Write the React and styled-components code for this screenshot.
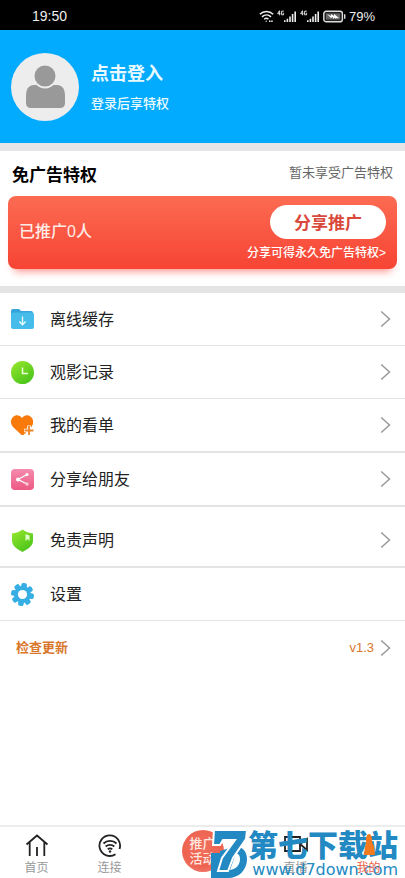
import React from 'react'
import styled, { createGlobalStyle } from 'styled-components'

const GlobalStyle = createGlobalStyle`
    *{
        box-sizing: border-box;
    }

    body{
        margin: 0;
        background-color: #fff;
        color: #222;
        font-family: "Liberation Sans", "Noto Sans CJK SC", sans-serif;
    }

    button, a{
        font-family: inherit;
    }

    h1, h2, p{
        margin: 0;
    }

    svg{
        display: block;
        flex-shrink: 0;
    }
`

const Page = styled.div`
    display: flex;
    flex-direction: column;
    min-height: 100vh;
`

const StatusBar = styled.div`
    display: flex;
    justify-content: space-between;
    align-items: center;
    height: 30px;
    padding: 2px 30px 0 32px;
    background-color: #000;
    color: #eee;
    font-size: 13px;
`

const StatusClock = styled.span`
    font-size: 14px;
`

const StatusIcons = styled.div`
    display: flex;
    align-items: center;
    gap: 3px;
`

const Profile = styled.header`
    display: flex;
    align-items: center;
    gap: 12px;
    height: 113px;
    padding: 0 11px;
    background-color: #03abff;
    color: #fff;
`

const ProfileText = styled.div`
    display: flex;
    flex-direction: column;
    gap: 8px;
    padding-top: 2px;
`

const LoginButton = styled.button`
    padding: 0;
    border: 0;
    background: none;
    color: #e8faff;
    font-size: 18px;
    font-weight: 700;
    line-height: 24px;
    text-align: left;
`

const LoginHint = styled.p`
    color: #e8faff;
    font-size: 13px;
    font-weight: 500;
    line-height: 20px;
`

const Privilege = styled.section`
    padding: 8px 8px 17px;
    border-top: 8px solid #e5e5e8;
    border-bottom: 7px solid #e4e4e4;
`

const PrivilegeHead = styled.div`
    display: flex;
    justify-content: space-between;
    align-items: center;
    height: 28px;
    margin-bottom: 9px;
    padding: 0 4px;
`

const PrivilegeTitle = styled.h2`
    color: #000;
    font-size: 17px;
    font-weight: 700;
`

const PrivilegeState = styled.span`
    color: #666;
    font-size: 13px;
    padding-bottom: 4px;
`

const PromoCard = styled.div`
    display: flex;
    justify-content: space-between;
    align-items: center;
    height: 73px;
    padding: 0 11px;
    border-radius: 8px;
    background: linear-gradient( #fc6b52, #f74434 );
    box-shadow: 0 8px 8px -6px #ff8a80;
    color: #ffebe6;
`

const PromoCount = styled.span`
    font-size: 16px;
    font-weight: 500;
    padding-bottom: 6px;
`

const PromoActions = styled.div`
    display: flex;
    flex-direction: column;
    align-items: flex-end;
    gap: 4px;
    padding-top: 2px;
`

const ShareButton = styled.button`
    width: 116px;
    height: 34px;
    padding: 0;
    border: 0;
    border-radius: 17px;
    background-color: #fff;
    color: #d9483b;
    font-size: 17px;
    font-weight: 700;
`

const ShareLink = styled.a`
    color: #fff;
    font-size: 12px;
    font-weight: 500;
    line-height: 20px;
    text-decoration: none;
`

const Menu = styled.nav`
    display: flex;
    flex-direction: column;
    flex-grow: 1;
`

const MenuRow = styled.a`
    display: flex;
    align-items: center;
    gap: 15px;
    min-height: ${ ( { $thick } ) => $thick ? 54 : 53 }px;
    margin-top: ${ ( { $spaced } ) => $spaced ? 7 : 0 }px;
    padding: 0 14px 0 10px;
    border-bottom: ${ ( { $thick } ) => $thick ? 2 : 1 }px solid #e4e4e4;
    color: #222;
    font-size: 16px;
    text-decoration: none;
`

const MenuLabel = styled.span`
    flex-grow: 1;
    padding-bottom: 2px;
`

const UpdateRow = styled( MenuRow )`
    gap: 6px;
    padding-left: 16px;
    border-bottom: 0;
    color: #d9782d;
    font-size: 13px;
`

const UpdateLabel = styled( MenuLabel )`
    font-weight: 700;
`

const TabBar = styled.nav`
    position: relative;
    display: grid;
    grid-template-columns: 73px 73px 1fr 73px 73px;
    height: 53px;
    padding-bottom: 1px;
    border-top: 2px solid #ececec;
`

const Tab = styled.a`
    position: relative;
    z-index: ${ ( { $active } ) => $active ? 1 : 0 };
    display: flex;
    flex-direction: column;
    align-items: center;
    justify-content: flex-end;
    gap: 2px;
    color: ${ ( { $active } ) => $active ? '#e8604a' : '#999' };
    font-size: 12px;
    line-height: 17px;
    text-decoration: none;
`

const PromoTab = styled.button`
    justify-self: center;
    width: 42px;
    height: 42px;
    margin-top: 3px;
    padding: 0;
    border: 0;
    border-radius: 50%;
    background: radial-gradient( circle at 50% 40%, #f0705e, #ee6350 60%, #f08a7c );
    color: #ffe9e0;
    font-size: 13px;
    font-weight: 500;
    line-height: 15px;
`

const Watermark = styled.div`
    position: absolute;
    right: 7px;
    bottom: 0;
    display: flex;
    align-items: flex-end;
    color: #2389c2;
    pointer-events: none;
`

const WatermarkText = styled.div`
    display: flex;
    flex-direction: column;
    align-items: flex-end;
`

const WatermarkName = styled.span`
    font-size: 30px;
    font-weight: 900;
    line-height: 32px;
`

const WatermarkUrl = styled.span`
    font-family: "DejaVu Sans", sans-serif;
    font-size: 16px;
    line-height: 16px;
`

const WifiIcon = () => (
    <svg width="15" height="13" viewBox="0 0 15 13" fill="none" stroke="#eee" strokeWidth="1.5">
        <path d="M.8 4.2C4.6.5 10.4.5 14.2 4.2M3 6.9c2.6-2.5 6.4-2.5 9 0M5.2 9.3c1.3-1.2 3-1.2 4.2 0" />
        <circle cx="7.2" cy="11.2" r=".7" fill="#eee" stroke="none" />
        <path d="M10 11.3h4" strokeDasharray="1.5 .7" />
    </svg>
)

const SignalIcon = () => (
    <svg width="20" height="13" viewBox="0 0 20 13">
        <path d="M2.4.7.6 3.700h2.800M2.600.7v4.600M6.800 1.200H4.600v3.600h2V3.200h-.9" fill="none" stroke="#ddd" />
        <path d="M7 10.300h1.600V12H7zM9.600 8.800h1.600V12H9.600zM12.200 6.600h1.600V12h-1.600zM14.800 4h1.600v8h-1.600zM17.400 1.500H19V12h-1.600z" fill="#eee" />
    </svg>
)

const BatteryIcon = () => (
    <svg width="23" height="13" viewBox="0 0 23 13">
        <rect x=".8" y="1.2" width="18.6" height="10.6" rx="2.4" fill="#222" stroke="#ddd" strokeWidth="1.4" />
        <path d="M3 3.5h14v6H3z" fill="#666" />
        <path d="m4 4 4 2V4l3 2V4l5 4-4 .5V7.500l-2 1.500V7l-2 1z" fill="#fff" />
        <path d="M21.700 4.200v4.600" stroke="#ddd" strokeWidth="1.4" />
    </svg>
)

const Avatar = () => (
    <svg width="68" height="68" viewBox="0 0 68 68">
        <circle cx="34" cy="34" r="34" fill="#ededed" />
        <path d="M23 32C17 32 15 37 15 43v7q0 5 5 5h29q5 0 5-5v-7c0-6-2-11-8-11z" fill="#999" />
        <circle cx="34" cy="23" r="11.5" fill="#999" stroke="#ededed" strokeWidth="2" />
    </svg>
)

const FolderIcon = () => (
    <svg width="25" height="25" viewBox="0 0 25 25">
        <path d="M1 4q0-2 2-2h6l2 2h10q2 0 2 2v3H1z" fill="#35a3dc" />
        <path d="M1 7.5q0-2 2-2h19q2 0 2 2V20q0 2-2 2H3q-2 0-2-2z" fill="#45bcea" />
        <path d="M12.5 9.5v8M9.3 14.5l3.2 3.2 3.2-3.2" fill="none" stroke="#e6faff" strokeWidth="1.4" />
    </svg>
)

const ClockIcon = () => (
    <svg width="25" height="25" viewBox="0 0 25 25">
        <defs>
            <linearGradient id="lime" x2=".7" y2="1">
                <stop stopColor="#9be82d" />
                <stop offset="1" stopColor="#49c41a" />
            </linearGradient>
        </defs>
        <circle cx="12.5" cy="12.5" r="11.5" fill="url(#lime)" />
        <path d="M12.5 7.5v6H18" fill="none" stroke="#eaffd8" strokeWidth="1.5" />
    </svg>
)

const HeartIcon = () => (
    <svg width="25" height="25" viewBox="0 0 25 25">
        <path d="M12 5C9.500 1.500 5.500 1.500 3 4c-3 3-2.500 7 0 10l8 7.500q1.500 1.200 3 0l7-7c2.800-3 3-8 0-10.500-2.500-2.500-6.500-2.500-9 1z" fill="#f87a0b" />
        <path d="M19 12.500v10M14 17.500h10" stroke="#fff" strokeWidth="3.600" />
        <path d="M19 13v9M14.500 17.500h9" stroke="#f08426" strokeWidth="1.800" />
    </svg>
)

const ShareIcon = () => (
    <svg width="25" height="25" viewBox="0 0 25 25">
        <defs>
            <linearGradient id="pink" x2="0" y2="1">
                <stop stopColor="#f58cae" />
                <stop offset="1" stopColor="#ec5983" />
            </linearGradient>
        </defs>
        <rect x="1" y="2" width="23" height="21" rx="4" fill="url(#pink)" />
        <path d="m17 7.5-9 5 9 4.500" fill="none" stroke="#fff" strokeWidth="1.300" />
        <circle cx="8" cy="12.5" r="2" fill="#fff" />
        <circle cx="17" cy="7.5" r="1.5" fill="#fff" />
        <circle cx="17" cy="17" r="1.7" fill="#fbc5d6" />
    </svg>
)

const ShieldIcon = () => (
    <svg width="25" height="25" viewBox="0 0 25 25">
        <path d="M12.5 1.500C9.500 4 6 5 2 5.500v7c0 5.500 5 8.500 10.500 11.500C18 21 23 18 23 12.500v-7c-4-.5-7.500-1.500-10.500-4z" fill="url(#lime)" />
        <path d="M15.500 6 19.500 7.500v5.500l-2-2-2 2z" fill="#e2ffc9" />
    </svg>
)

const teeth = [ 0, 45, 90, 135, 180, 225, 270, 315 ]

const GearIcon = () => (
    <svg width="25" height="25" viewBox="0 0 25 25">
        <g fill="#35aee4">
            { teeth.map( angle => (
                <rect key={ angle } x="9.7" y="1" width="5.6" height="8" rx="1.8" transform={ `rotate(${ angle + 10 } 12.5 12.5)` } />
            ) ) }
            <circle cx="12.5" cy="12.5" r="8.5" />
        </g>
        <circle cx="12.5" cy="12.5" r="4.6" fill="#fff" />
    </svg>
)

const Arrow = () => (
    <svg width="11" height="18" viewBox="0 0 11 18" fill="none" stroke="#999" strokeWidth="1.5">
        <path d="m1.2 1.5 8.300 7.500-8.300 7.500" />
    </svg>
)

const HomeIcon = () => (
    <svg width="24" height="24" viewBox="0 0 24 24" fill="none" stroke="#222" strokeWidth="1.8">
        <path d="M1.500 10.500 12 1.500l10.500 9M4.700 8v14M19.300 8v14M12 13v9" />
    </svg>
)

const LinkIcon = () => (
    <svg width="24" height="24" viewBox="0 0 24 24" fill="none" stroke="#222" strokeWidth="1.8">
        <path d="M17.500 20.200A10.300 10.300 0 1 1 21.500 15" />
        <path d="M5.500 9.500c3.500-3.500 9.500-3.500 13 0M7.700 12.500c2.400-2.300 6.200-2.300 8.600 0M9.800 15.300c1.200-1.200 3.200-1.200 4.400 0" />
        <circle cx="12" cy="17.5" r="1.2" fill="#222" stroke="none" />
    </svg>
)

const CameraIcon = () => (
    <svg width="24" height="24" viewBox="0 0 24 24" fill="none" stroke="#222" strokeWidth="1.8">
        <path d="M1 3h15v14H1zM16 10l7-5v11z" />
    </svg>
)

const MineIcon = () => (
    <svg width="24" height="24" viewBox="0 0 24 24" fill="#f47a20">
        <path d="M12 0c2 0 3 3 3 6s1 4 2 6l1 9H7l1-9c1-2 1-3 1-6s1-6 3-6z" />
    </svg>
)

const SevenLogo = () => (
    <svg width="38" height="49" viewBox="0 0 38 49" fill="#2389c2">
        <path d="M1 24h9v-2l16-5c7 1 11 6 11 13 0 11-8 19-19 19H1z" />
        <path d="M26 24c3 1 4 3 4 6 0 6-4 10-10 11z" fill="#fff" />
        <path d="M4 1h33l-1 9-13 19-5 13H8l4-13L25 11H13l-3 5H3z" stroke="#fff" strokeWidth="2" />
    </svg>
)

const rows = [
    { label: '离线缓存', Icon: FolderIcon },
    { label: '观影记录', Icon: ClockIcon },
    { label: '我的看单', Icon: HeartIcon, thick: true },
    { label: '分享给朋友', Icon: ShareIcon, thick: true },
    { label: '免责声明', Icon: ShieldIcon, thick: true, spaced: true },
    { label: '设置', Icon: GearIcon, noArrow: true },
]

export default function App()
{
    return (
        <Page>
            <GlobalStyle />

            <StatusBar>
                <StatusClock>19:50</StatusClock>
                <StatusIcons>
                    <WifiIcon />
                    <SignalIcon />
                    <SignalIcon />
                    <BatteryIcon />
                    <span>79%</span>
                </StatusIcons>
            </StatusBar>

            <Profile>
                <Avatar />
                <ProfileText>
                    <LoginButton>点击登入</LoginButton>
                    <LoginHint>登录后享特权</LoginHint>
                </ProfileText>
            </Profile>

            <Privilege>
                <PrivilegeHead>
                    <PrivilegeTitle>免广告特权</PrivilegeTitle>
                    <PrivilegeState>暂未享受广告特权</PrivilegeState>
                </PrivilegeHead>
                <PromoCard>
                    <PromoCount>已推广0人</PromoCount>
                    <PromoActions>
                        <ShareButton>分享推广</ShareButton>
                        <ShareLink href="#share">分享可得永久免广告特权&gt;</ShareLink>
                    </PromoActions>
                </PromoCard>
            </Privilege>

            <Menu>
                { rows.map( ( { label, Icon, thick, spaced, noArrow } ) => (
                    <MenuRow key={ label } href="#menu" $thick={ thick } $spaced={ spaced }>
                        <Icon />
                        <MenuLabel>{ label }</MenuLabel>
                        { ! noArrow && <Arrow /> }
                    </MenuRow>
                ) ) }
                <UpdateRow href="#update">
                    <UpdateLabel>检查更新</UpdateLabel>
                    <span>v1.3</span>
                    <Arrow />
                </UpdateRow>
            </Menu>

            <TabBar>
                <Tab href="#home"><HomeIcon />首页</Tab>
                <Tab href="#link"><LinkIcon />连接</Tab>
                <PromoTab>推广<br />活动</PromoTab>
                <Tab href="#live"><CameraIcon />直播</Tab>
                <Watermark>
                    <SevenLogo />
                    <WatermarkText>
                        <WatermarkName>第七下载站</WatermarkName>
                        <WatermarkUrl>www.d7down.com</WatermarkUrl>
                    </WatermarkText>
                </Watermark>
                <Tab href="#mine" $active><MineIcon />我的</Tab>
            </TabBar>
        </Page>
    )
}
